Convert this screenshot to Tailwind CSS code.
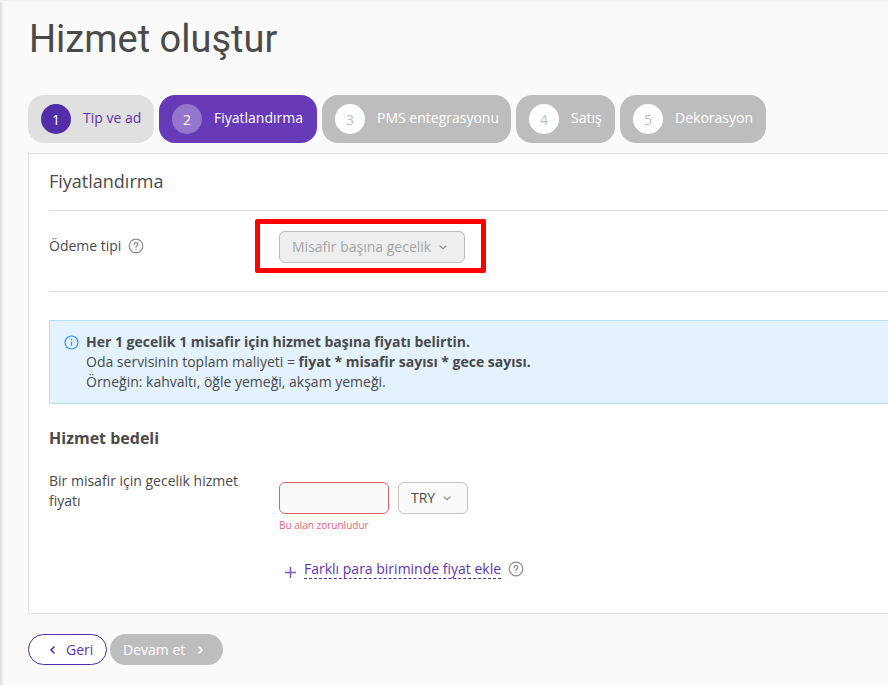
<!DOCTYPE html>
<html lang="tr">
<head>
  <meta charset="UTF-8" />
  <meta name="viewport" content="width=device-width, initial-scale=1.0">
  <title>Hizmet oluştur</title>
  <script src="https://cdn.jsdelivr.net/npm/@tailwindcss/browser@4"></script>
</head>
<body class="bg-[#fafafa] h-[685px] w-[888px] overflow-hidden font-['Open_Sans',sans-serif] text-[14px] text-[#4a4a4a] relative">

  <!-- edge shadows -->
  <div class="absolute left-0 top-0 w-[4px] h-full bg-gradient-to-r from-[#dcdcdc] to-[#fafafa]"></div>
  <div class="absolute left-0 top-0 w-full h-[2px] bg-gradient-to-b from-[#ececec] to-[#fafafa]"></div>

  <div class="pl-[28px]">
    <h1 class="h-[95px] pt-[14px] pl-[1px] font-['Roboto',sans-serif] text-[38px] leading-[50px] text-[#4a4a4a]">Hizmet oluştur</h1>

    <!-- steps -->
    <div class="flex gap-[5px] h-[48px]">
      <div class="flex items-center gap-[12px] pl-[13px] pr-[13px] w-[126px] rounded-[16px] bg-[#e0e0e0] text-[#5e35a8]">
        <span class="w-[30px] h-[30px] shrink-0 rounded-full bg-[#512da8] text-white flex items-center justify-center">1</span>
        <span class="whitespace-nowrap mb-[4px]">Tip ve ad</span>
      </div>
      <div class="flex items-center gap-[12px] pl-[13px] pr-[13px] w-[158px] rounded-[16px] bg-[#673ab7] text-white">
        <span class="w-[30px] h-[30px] shrink-0 rounded-full bg-[#9575cd] text-white flex items-center justify-center">2</span>
        <span class="whitespace-nowrap mb-[4px]">Fiyatlandırma</span>
      </div>
      <div class="flex items-center gap-[12px] pl-[13px] pr-[13px] w-[189px] rounded-[16px] bg-[#bdbdbd] text-white">
        <span class="w-[30px] h-[30px] shrink-0 rounded-full bg-white text-[#bdbdbd] flex items-center justify-center">3</span>
        <span class="whitespace-nowrap mb-[4px]">PMS entegrasyonu</span>
      </div>
      <div class="flex items-center gap-[12px] pl-[13px] pr-[13px] w-[99px] rounded-[16px] bg-[#bdbdbd] text-white">
        <span class="w-[30px] h-[30px] shrink-0 rounded-full bg-white text-[#bdbdbd] flex items-center justify-center">4</span>
        <span class="whitespace-nowrap mb-[4px]">Satış</span>
      </div>
      <div class="flex items-center gap-[12px] pl-[13px] pr-[13px] w-[146px] rounded-[16px] bg-[#bdbdbd] text-white">
        <span class="w-[30px] h-[30px] shrink-0 rounded-full bg-white text-[#bdbdbd] flex items-center justify-center">5</span>
        <span class="whitespace-nowrap mb-[4px]">Dekorasyon</span>
      </div>
    </div>

    <!-- card -->
    <div class="mt-[10px] w-[900px] h-[461px] bg-white border border-[#e0e0e0] pl-[20px]">
      <h2 class="h-[57px] pt-[13px] text-[18px] leading-[28px] border-b border-[#e0e0e0]">Fiyatlandırma</h2>

      <div class="flex h-[81px] border-b border-[#e0e0e0] pt-[20px]">
        <div class="w-[230px] flex items-start gap-[7px] leading-[30px]">
          Ödeme tipi
          <svg class="mt-[7px]" width="16" height="16" viewBox="0 0 16 16" fill="none" stroke="#8a8a8a" stroke-width="1.2"><circle cx="8" cy="8" r="6.8"/><path d="M6.1 6.4c0-1.1.9-1.8 1.9-1.8s1.9.7 1.9 1.7c0 1.5-1.9 1.5-1.9 3" stroke-linecap="round"/><circle cx="8" cy="11.4" r=".6" fill="#8a8a8a" stroke="none"/></svg>
        </div>
        <div class="relative">
          <div class="w-[186px] h-[32px] rounded-[6px] border border-[#bdbdbd] bg-[#eeeeee] text-[#a6a6a6] flex items-center pl-[12px] gap-[8px] whitespace-nowrap">
            <span class="mb-[2px]">Misafir başına gecelik</span>
            <svg width="8" height="5" viewBox="0 0 8 5" fill="none" stroke="#8f8f8f" stroke-width="1.2"><path d="M.7.7L4 3.8 7.3.7"/></svg>
          </div>
          <div class="absolute left-[-24px] top-[-12px] w-[231px] h-[54px] border-[5px] border-[#ff0000] rounded-[2px]"></div>
        </div>
      </div>

      <!-- info box -->
      <div class="mt-[28px] h-[84px] bg-[#e3f2fd] border border-[#bbdefb] pl-[14px] pt-[11px] flex gap-[7px] leading-[20px]">
        <svg class="mt-[3px] shrink-0" width="15" height="15" viewBox="0 0 15 15" fill="none" stroke="#2196f3" stroke-width="1.2"><circle cx="7.5" cy="7.5" r="6.5"/><path d="M7.5 6.6v4" /><circle cx="7.5" cy="4.5" r=".7" fill="#2196f3" stroke="none"/></svg>
        <div>
          <div class="font-bold">Her 1 gecelik 1 misafir için hizmet başına fiyatı belirtin.</div>
          <div>Oda servisinin toplam maliyeti = <b>fiyat * misafir sayısı * gece sayısı.</b></div>
          <div>Örneğin: kahvaltı, öğle yemeği, akşam yemeği.</div>
        </div>
      </div>

      <h3 class="mt-[23px] text-[16px] leading-[22px] font-bold">Hizmet bedeli</h3>

      <div class="flex mt-[33px]">
        <div class="w-[230px] leading-[20px] pr-[20px] -mt-[11px]">Bir misafir için gecelik hizmet fiyatı</div>
        <div>
          <div class="flex gap-[9px]">
            <div class="w-[110px] h-[32px] rounded-[6px] border border-[#dc6262] bg-[#fafafa]"></div>
            <div class="w-[70px] h-[32px] rounded-[6px] border border-[#c4c4c4] bg-[#fafafa] flex items-center pl-[12px] gap-[8px]">
              <span class="mb-[2px]">TRY</span>
              <svg width="8" height="5" viewBox="0 0 8 5" fill="none" stroke="#8f8f8f" stroke-width="1.2"><path d="M.7.7L4 3.8 7.3.7"/></svg>
            </div>
          </div>
          <div class="mt-[4px] text-[10px] leading-[14px] text-[#e0637a]">Bu alan zorunludur</div>
          <div class="mt-[25px] flex items-center h-[24px] whitespace-nowrap">
            <svg class="ml-[6px] mr-[8px] mt-[7px]" width="11" height="11" viewBox="0 0 11 11" stroke="#7e57c2" stroke-width="1.5"><path d="M5.5 0v11M0 5.5h11"/></svg>
            <span class="text-[#5e35b1] border-b border-dashed border-[#512da8] leading-[18px]">Farklı para biriminde fiyat ekle</span>
            <svg class="ml-[7px]" width="16" height="16" viewBox="0 0 16 16" fill="none" stroke="#8a8a8a" stroke-width="1.2"><circle cx="8" cy="8" r="6.8"/><path d="M6.1 6.4c0-1.1.9-1.8 1.9-1.8s1.9.7 1.9 1.7c0 1.5-1.9 1.5-1.9 3" stroke-linecap="round"/><circle cx="8" cy="11.4" r=".6" fill="#8a8a8a" stroke="none"/></svg>
          </div>
        </div>
      </div>
    </div>

    <!-- footer buttons -->
    <div class="flex gap-[3px] mt-[20px]">
      <div class="w-[79px] h-[31px] rounded-full border border-[#512da8] bg-white text-[#5e35b1] flex items-center pl-[20px] gap-[10px]">
        <svg width="7" height="10" viewBox="0 0 7 10" fill="none" stroke="#512da8" stroke-width="1.5"><path d="M5.5 1.5L2 5l3.5 3.5"/></svg>
        Geri
      </div>
      <div class="w-[113px] h-[31px] rounded-full bg-[#bdbdbd] text-white flex items-center pl-[13px] gap-[12px]">
        Devam et
        <svg width="7" height="10" viewBox="0 0 7 10" fill="none" stroke="#ffffff" stroke-width="1.5"><path d="M1.5 1.5L5 5 1.5 8.5"/></svg>
      </div>
    </div>
  </div>
</body>
</html>
